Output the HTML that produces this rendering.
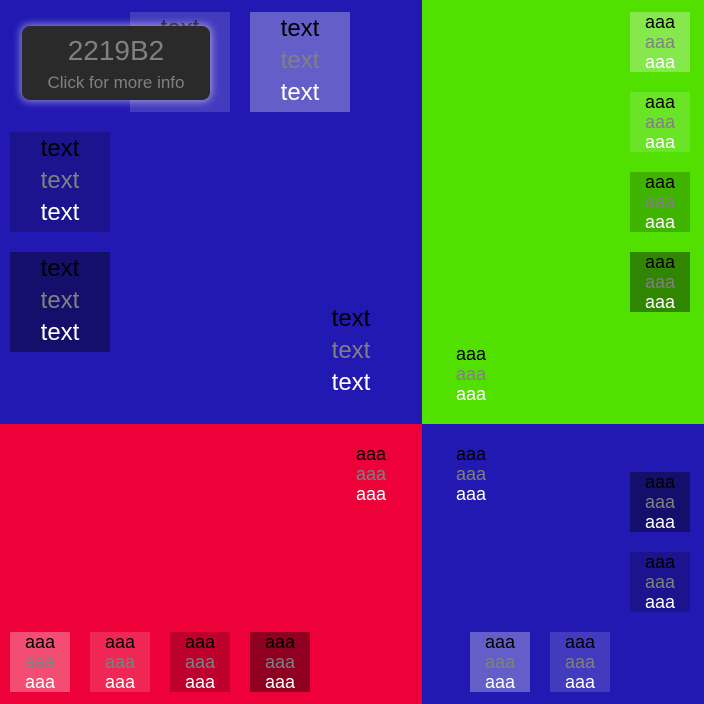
<!DOCTYPE html>
<html><head><style>
*{margin:0;padding:0}
body{width:704px;height:704px;position:relative;overflow:hidden;font-family:"Liberation Sans",Arial,sans-serif}
.q{position:absolute}
.b{position:absolute;display:flex;flex-direction:column;justify-content:center;align-items:center}
.s{font-size:18px;line-height:20px}
.L{font-size:24px;line-height:32px;padding-bottom:2px;box-sizing:border-box}
.k{color:#000}.g{color:#808080}.w{color:#fff}
.bx{width:60px;height:60px}
.BX{width:100px;height:100px}
</style></head><body>
<div class="q" style="left:0;top:0;width:422px;height:424px;background:#2219B2"></div>
<div class="q" style="left:422px;top:0;width:282px;height:424px;background:#51E000"></div>
<div class="q" style="left:0;top:424px;width:422px;height:280px;background:#EE0038"></div>
<div class="q" style="left:422px;top:424px;width:282px;height:280px;background:#2219B2"></div>

<div class="b BX L" style="left:130px;top:12px;background:rgba(255,255,255,.15)"><div class="k">text</div><div class="g">text</div><div class="w">text</div></div>
<div class="b BX L" style="left:250px;top:12px;background:rgba(255,255,255,.3)"><div class="k">text</div><div class="g">text</div><div class="w">text</div></div>
<div class="b BX L" style="left:10px;top:132px;background:rgba(0,0,0,.2)"><div class="k">text</div><div class="g">text</div><div class="w">text</div></div>
<div class="b BX L" style="left:10px;top:252px;background:rgba(0,0,0,.4)"><div class="k">text</div><div class="g">text</div><div class="w">text</div></div>
<div class="b BX L" style="left:301px;top:302px"><div class="k">text</div><div class="g">text</div><div class="w">text</div></div>

<div class="b bx s" style="left:630px;top:12px;background:rgba(255,255,255,.3)"><div class="k">aaa</div><div class="g">aaa</div><div class="w">aaa</div></div>
<div class="b bx s" style="left:630px;top:92px;background:rgba(255,255,255,.15)"><div class="k">aaa</div><div class="g">aaa</div><div class="w">aaa</div></div>
<div class="b bx s" style="left:630px;top:172px;background:rgba(0,0,0,.2)"><div class="k">aaa</div><div class="g">aaa</div><div class="w">aaa</div></div>
<div class="b bx s" style="left:630px;top:252px;background:rgba(0,0,0,.4)"><div class="k">aaa</div><div class="g">aaa</div><div class="w">aaa</div></div>
<div class="b bx s" style="left:441px;top:344px"><div class="k">aaa</div><div class="g">aaa</div><div class="w">aaa</div></div>

<div class="b bx s" style="left:341px;top:444px"><div class="k">aaa</div><div class="g">aaa</div><div class="w">aaa</div></div>
<div class="b bx s" style="left:10px;top:632px;background:rgba(255,255,255,.3)"><div class="k">aaa</div><div class="g">aaa</div><div class="w">aaa</div></div>
<div class="b bx s" style="left:90px;top:632px;background:rgba(255,255,255,.15)"><div class="k">aaa</div><div class="g">aaa</div><div class="w">aaa</div></div>
<div class="b bx s" style="left:170px;top:632px;background:rgba(0,0,0,.2)"><div class="k">aaa</div><div class="g">aaa</div><div class="w">aaa</div></div>
<div class="b bx s" style="left:250px;top:632px;background:rgba(0,0,0,.4)"><div class="k">aaa</div><div class="g">aaa</div><div class="w">aaa</div></div>

<div class="b bx s" style="left:441px;top:444px"><div class="k">aaa</div><div class="g">aaa</div><div class="w">aaa</div></div>
<div class="b bx s" style="left:630px;top:472px;background:rgba(0,0,0,.4)"><div class="k">aaa</div><div class="g">aaa</div><div class="w">aaa</div></div>
<div class="b bx s" style="left:630px;top:552px;background:rgba(0,0,0,.2)"><div class="k">aaa</div><div class="g">aaa</div><div class="w">aaa</div></div>
<div class="b bx s" style="left:470px;top:632px;background:rgba(255,255,255,.3)"><div class="k">aaa</div><div class="g">aaa</div><div class="w">aaa</div></div>
<div class="b bx s" style="left:550px;top:632px;background:rgba(255,255,255,.15)"><div class="k">aaa</div><div class="g">aaa</div><div class="w">aaa</div></div>

<div class="q" style="left:22px;top:26px;width:188px;height:74px;background:#2a2a2a;border-radius:8px;box-shadow:0 0 8px 2px rgba(255,255,255,.45);text-align:center;color:#808080">
<div style="font-size:28px;line-height:32px;margin-top:9px">2219B2</div>
<div style="font-size:17px;line-height:20px;margin-top:6px">Click for more info</div>
</div>
</body></html>
